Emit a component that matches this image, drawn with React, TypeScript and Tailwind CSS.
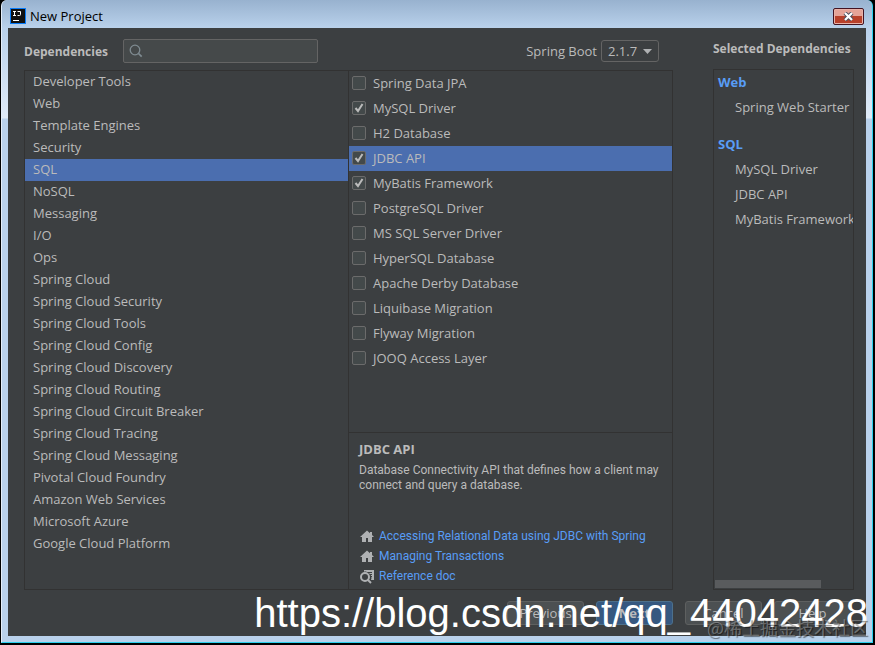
import { clsx } from "clsx";
import { useState } from "react";

const categories = [
  "Developer Tools",
  "Web",
  "Template Engines",
  "Security",
  "SQL",
  "NoSQL",
  "Messaging",
  "I/O",
  "Ops",
  "Spring Cloud",
  "Spring Cloud Security",
  "Spring Cloud Tools",
  "Spring Cloud Config",
  "Spring Cloud Discovery",
  "Spring Cloud Routing",
  "Spring Cloud Circuit Breaker",
  "Spring Cloud Tracing",
  "Spring Cloud Messaging",
  "Pivotal Cloud Foundry",
  "Amazon Web Services",
  "Microsoft Azure",
  "Google Cloud Platform",
];

const dependencies = [
  "Spring Data JPA",
  "MySQL Driver",
  "H2 Database",
  "JDBC API",
  "MyBatis Framework",
  "PostgreSQL Driver",
  "MS SQL Server Driver",
  "HyperSQL Database",
  "Apache Derby Database",
  "Liquibase Migration",
  "Flyway Migration",
  "JOOQ Access Layer",
];

const selectedGroups = [
  { name: "Web", items: ["Spring Web Starter"] },
  { name: "SQL", items: ["MySQL Driver", "JDBC API", "MyBatis Framework"] },
];

const links = [
  { label: "Accessing Relational Data using JDBC with Spring", icon: HomeIcon },
  { label: "Managing Transactions", icon: HomeIcon },
  { label: "Reference doc", icon: ReferenceIcon },
];

function HomeIcon() {
  return (
    <svg className="size-4 shrink-0" viewBox="0 0 16 16" fill="#afb1b3" aria-hidden="true">
      <path d="M8 2.500 1 9h2v5h4v-4h2v4h4V9h2l-2-2V4h-2v1.300z" />
    </svg>
  );
}

function ReferenceIcon() {
  return (
    <svg className="size-4 shrink-0" viewBox="0 0 16 16" aria-hidden="true">
      <path d="M5 2h10v10h-3A6 6 0 0 0 5 4z" fill="#afb1b3" />
      <path d="M8 4.500h5M10.500 6.500H13M11.500 8.500H13" stroke="#3c3f41" />
      <circle cx="6" cy="9" r="5.500" fill="#3c3f41" />
      <circle cx="6" cy="9" r="4" fill="none" stroke="#afb1b3" strokeWidth="2" />
      <path d="m8.500 11.500 3.500 3.500" stroke="#afb1b3" strokeWidth="2" />
      <path d="M9.500 4.500H13M11 6.500h2M11.500 8.500H13" stroke="#3c3f41" />
    </svg>
  );
}

function SearchIcon() {
  return (
    <svg className="size-4 shrink-0" viewBox="0 0 16 16" fill="none" stroke="#7f8b91" aria-hidden="true">
      <circle cx="7" cy="7" r="4.800" strokeWidth="1.300" />
      <path d="m10.500 10.500 3.200 3.200" strokeWidth="1.700" />
    </svg>
  );
}

function AppIcon() {
  return (
    <svg className="size-4 shrink-0" viewBox="0 0 16 16" aria-hidden="true">
      <rect width="16" height="16" fill="#087cfa" />
      <rect x="1" y="1" width="14" height="14" fill="#111" />
      <path d="M3 3.500h3M4.500 3.500v4M3 7.500h3M7.500 3.500h3v3q0 1-1 1H7.500" fill="none" stroke="#fff" />
      <path d="M3 12.500h6" stroke="#fff" />
    </svg>
  );
}

function TitleBar() {
  return (
    <header className="-mx-[6px] flex h-7 shrink-0 items-center gap-1 rounded-t-md bg-linear-to-b from-[#98b2cf] to-[#b9d1eb] pt-1 pr-2 pl-2 text-black">
      <AppIcon />
      <h1 className="flex-1">New Project</h1>
      <button
        type="button"
        aria-label="Close"
        className="flex h-[17px] w-[31px] items-center justify-center rounded-[2px] border border-[#431422] bg-linear-to-b from-[#e5a397] from-45% to-[#b8402a] to-50% shadow-[inset_0_0_0_1px_#e9b2a8]"
      >
        <svg className="h-[9px] w-[11px]" viewBox="0 0 11 9" aria-hidden="true">
          <path d="m2 1 7 7M9 1 2 8" stroke="#4a5160" strokeWidth="4" />
          <path d="m2 1 7 7M9 1 2 8" stroke="#fff" strokeWidth="2.200" />
        </svg>
      </button>
    </header>
  );
}

type DependencyRowProps = {
  name: string;
  active: boolean;
  checked: boolean;
  onToggle: () => void;
};

function DependencyRow({ name, active, checked, onToggle }: DependencyRowProps) {
  return (
    <li>
      <label className={clsx("flex h-[25px] items-center gap-[7px] pb-px pl-[3px]", active && "bg-[#4b6eaf]")}>
        <span className="grid size-[14px] shrink-0">
          <input
            type="checkbox"
            checked={checked}
            onChange={onToggle}
            className="peer col-start-1 row-start-1 size-[14px] appearance-none rounded-[2px] border border-[#6b6b6b] bg-[#43494a]"
          />
          <svg
            className="invisible col-start-1 row-start-1 size-[14px] peer-checked:visible"
            viewBox="0 0 14 14"
            fill="none"
            stroke="#bbbbbb"
            strokeWidth="2"
            aria-hidden="true"
          >
            <path d="m3.500 7 2.500 3 4.500-7" />
          </svg>
        </span>
        {name}
      </label>
    </li>
  );
}

function Details() {
  return (
    <section className="flex h-[157px] flex-col border-t border-[#323232] pt-[7px] pr-2 pb-[3px] pl-[10px]">
      <h2 className="leading-[18px] font-bold">JDBC API</h2>
      <p className="mt-[5px] font-['Roboto',sans-serif] text-[12px] leading-[15px]">
        Database Connectivity API that defines how a client may connect and query a database.
      </p>
      <ul className="mt-auto font-['Roboto',sans-serif] text-[12px] leading-5 text-[#589df6]">
        {links.map(({ label, icon: Icon }) => (
          <li key={label}>
            <a href="#" className="flex items-center gap-1">
              <Icon />
              {label}
            </a>
          </li>
        ))}
      </ul>
    </section>
  );
}

function SelectedDependencies() {
  return (
    <aside className="flex w-[141px] shrink-0 flex-col">
      <h2 className="h-[41px] pt-3 text-[12px] leading-[18px] font-bold whitespace-nowrap">Selected Dependencies</h2>
      <div className="flex flex-1 flex-col overflow-hidden border border-[#323232] pb-px pl-px">
        <div className="flex flex-1 flex-col gap-3">
          {selectedGroups.map((group) => (
            <section key={group.name}>
              <h3 className="pl-[3px] leading-[25px] font-bold text-[#589df6]">{group.name}</h3>
              <ul className="pl-5 leading-[25px] whitespace-nowrap">
                {group.items.map((item) => (
                  <li key={item}>{item}</li>
                ))}
              </ul>
            </section>
          ))}
        </div>
        <div className="h-2 w-[106px] bg-[#595b5d]" />
      </div>
    </aside>
  );
}

const buttonClass = "h-6 w-[77px] rounded-[3px] border border-[#5e6060] bg-[#4c5052] leading-none";

export default function App() {
  const [category, setCategory] = useState("SQL");
  const [checked, setChecked] = useState(["MySQL Driver", "JDBC API", "MyBatis Framework"]);

  const toggle = (name: string) =>
    setChecked((list) => (list.includes(name) ? list.filter((item) => item !== name) : [...list, name]));

  return (
    <div className="relative flex min-h-screen flex-col bg-black pr-[2px] pb-[2px] pl-px font-['Open_Sans','Noto_Sans_CJK_SC',sans-serif] text-[13px] leading-5 text-[#bbbbbb]">
      <div className="flex flex-1 flex-col rounded-t-md border-r border-b border-l border-r-[#2bd0ee] border-b-[#2bd0ee] border-l-[#e4eefa] bg-linear-to-b from-[#b9d1eb] from-[28px] via-[#e0ebf8] via-[118px] to-[#b9d1eb] to-[119px] px-[6px] pb-[6px]">
        <TitleBar />
        <main className="flex flex-1 flex-col bg-[#3c3f41] pb-[11px]">
          <div className="flex flex-1 gap-10 pr-3 pl-4">
            <div className="flex min-w-0 flex-1 flex-col">
              <div className="flex h-[42px] items-center pt-1 pr-[14px]">
                <label htmlFor="search" className="w-[99px] pt-px text-[12px] font-bold">
                  Dependencies
                </label>
                <div className="flex h-6 w-[195px] items-center rounded-[2px] border border-[#646464] bg-[#45494a] pl-1">
                  <SearchIcon />
                  <input id="search" type="text" className="h-full min-w-0 flex-1 bg-transparent px-1 outline-none" />
                </div>
                <label htmlFor="version" className="mr-1 ml-auto">
                  Spring Boot
                </label>
                <div className="grid items-center">
                  <select
                    id="version"
                    className="col-start-1 row-start-1 h-[22px] w-[58px] appearance-none rounded-[3px] border border-[#646464] bg-[#3c3f41] pl-[6px] leading-none"
                  >
                    <option>2.1.7</option>
                  </select>
                  <svg
                    className="pointer-events-none col-start-1 row-start-1 mr-[7px] h-[5px] w-[9px] justify-self-end"
                    viewBox="0 0 9 5"
                    fill="#afb1b3"
                    aria-hidden="true"
                  >
                    <path d="M0 0h9L4.500 5z" />
                  </svg>
                </div>
              </div>

              <div className="flex flex-1 border border-[#323232]">
                <ul className="min-w-0 flex-1">
                  {categories.map((name) => (
                    <li key={name}>
                      <button
                        type="button"
                        onClick={() => setCategory(name)}
                        className={clsx(
                          "block h-[22px] w-full pb-[2px] pl-2 text-left leading-5",
                          name === category && "bg-[#4b6eaf]",
                        )}
                      >
                        {name}
                      </button>
                    </li>
                  ))}
                </ul>
                <div className="flex w-[324px] flex-col border-l border-[#323232]">
                  <ul className="flex-1">
                    {dependencies.map((name) => (
                      <DependencyRow
                        key={name}
                        name={name}
                        active={name === "JDBC API"}
                        checked={checked.includes(name)}
                        onToggle={() => toggle(name)}
                      />
                    ))}
                  </ul>
                  <Details />
                </div>
              </div>
            </div>
            <SelectedDependencies />
          </div>

          <footer className="mt-[11px] flex justify-end gap-3 pr-[15px]">
            <button type="button" className={buttonClass}>
              Previous
            </button>
            <button
              type="button"
              className="h-6 w-[77px] rounded-[3px] border border-[#4c708c] bg-[#365880] leading-none font-bold"
            >
              Next
            </button>
            <button type="button" className={buttonClass}>
              Cancel
            </button>
            <button type="button" className={buttonClass}>
              Help
            </button>
          </footer>
        </main>
      </div>

      <p className="pointer-events-none absolute right-[7px] bottom-[9px] font-['Liberation_Sans',sans-serif] text-[40px] leading-[46px] whitespace-nowrap text-white">
        https://blog.csdn.net/qq_44042428
      </p>
      <p className="pointer-events-none absolute right-[7px] bottom-[6px] font-['Noto_Sans_CJK_SC',sans-serif] text-[18px] leading-6 whitespace-nowrap text-white/30 [text-shadow:1px_1px_1px_#00000080]">
        @稀土掘金技术社区
      </p>
    </div>
  );
}
